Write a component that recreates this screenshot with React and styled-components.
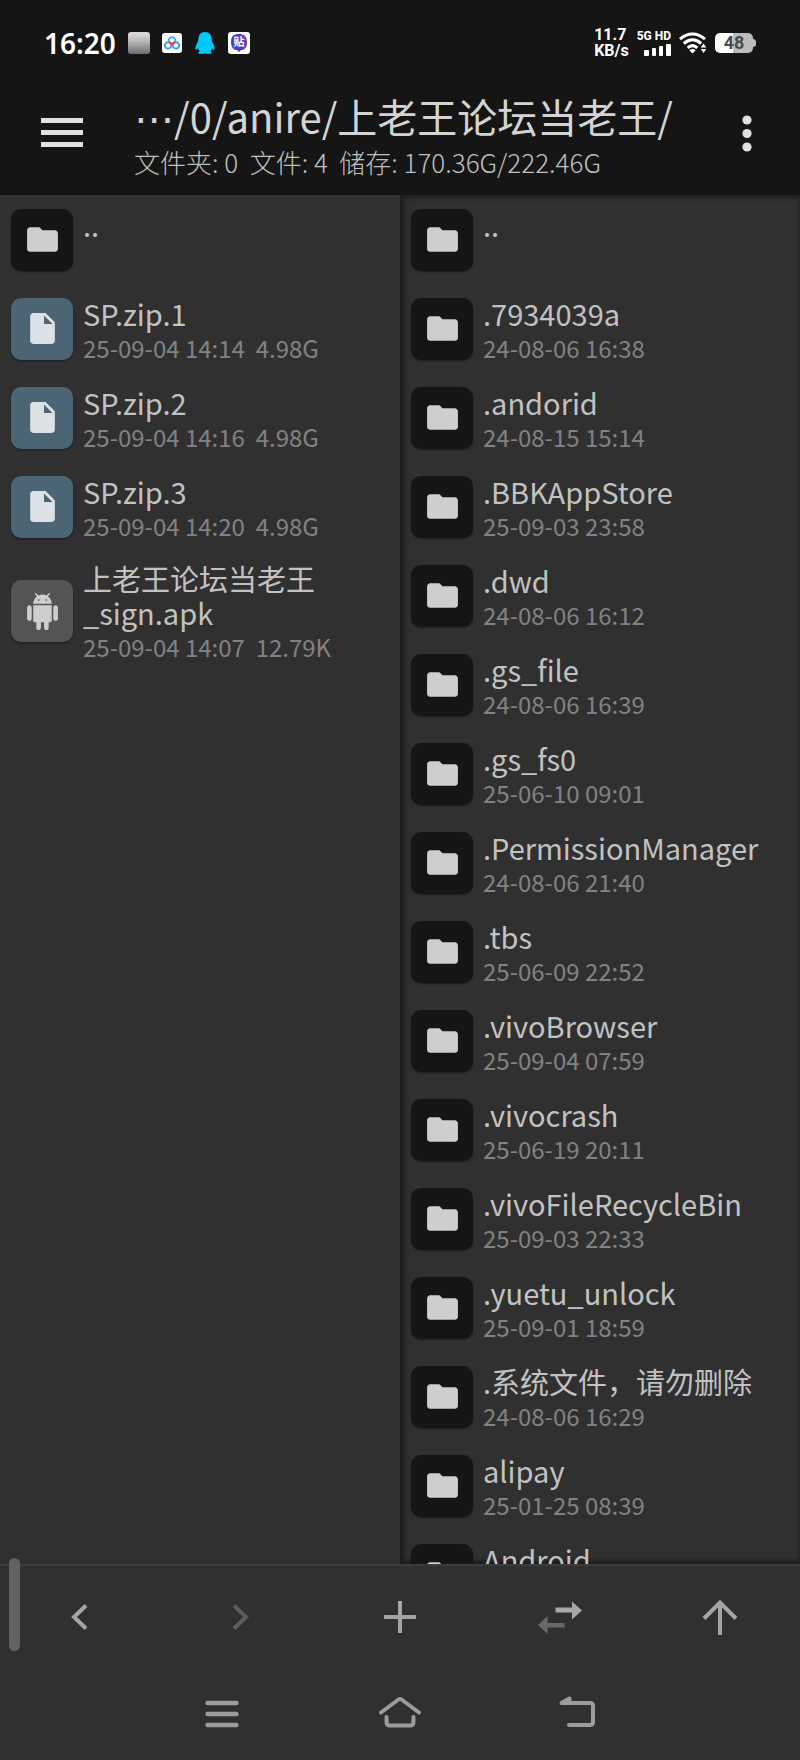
import React from "react";
import styled, { createGlobalStyle } from "styled-components";

const GlobalStyle = createGlobalStyle`
  * {
    box-sizing: border-box;
  }

  body {
    margin: 0;
    background-color: #303030;
    font-family: "Noto Sans CJK SC", "Noto Sans", sans-serif;
  }

  button {
    border: none;
    padding: 0;
    margin: 0;
    background: none;
    color: inherit;
    font-family: inherit;
    cursor: pointer;
  }

  svg {
    display: block;
    flex-shrink: 0;
  }
`;

const Page = styled.div`
  display: flex;
  flex-direction: column;
  height: 100vh;
  background-color: #303030;
  color: #c8c8c8;
`;

const StatusBar = styled.div`
  display: flex;
  justify-content: space-between;
  align-items: center;
  height: 86px;
  padding: 0 44px;
  background-color: #151515;
  color: #ffffff;
`;

const StatusGroup = styled.div`
  display: flex;
  align-items: center;
  gap: ${(props) => props.$gap}px;
`;

const Clock = styled.span`
  font-family: "Noto Sans", sans-serif;
  font-size: 28px;
  line-height: 32px;
  font-weight: 600;
`;

const Speed = styled.span`
  display: flex;
  flex-direction: column;
  font-family: Roboto, sans-serif;
  font-size: 16px;
  line-height: 16px;
  font-weight: 700;
`;

const Signal = styled.span`
  display: flex;
  flex-direction: column;
  align-items: flex-end;
  gap: 2px;
  font-family: Roboto, sans-serif;
  font-size: 12px;
  line-height: 12px;
  font-weight: 800;
`;

const Battery = styled.span`
  display: flex;
  align-items: center;
`;

const BatteryBody = styled.span`
  display: flex;
  justify-content: center;
  align-items: center;
  width: 38px;
  height: 20px;
  border-radius: 5px;
  background: linear-gradient(to right, #ffffff 48%, #bbbbbb 48%);
  color: #4a4a4a;
  font-family: Roboto, sans-serif;
  font-size: 18px;
  line-height: 20px;
  font-weight: 700;
`;

const BatteryTip = styled.span`
  width: 3px;
  height: 8px;
  border-radius: 0 3px 3px 0;
  background-color: #bbbbbb;
`;

const AppBar = styled.header`
  display: flex;
  align-items: center;
  height: 109px;
  padding: 0 32px 15px 40px;
  background-color: #151515;
  color: #e0e0e0;
`;

const PathBox = styled.div`
  flex: 1;
  min-width: 0;
  padding: 4px 0 0 50px;
  white-space: pre;
`;

const Path = styled.h1`
  margin: 0;
  font-size: 40px;
  line-height: 50px;
  font-weight: 400;
  color: #d4d4d4;
`;

const Dots = styled.span`
  font-family: "DejaVu Sans", sans-serif;
`;

const Summary = styled.p`
  margin: 0;
  font-size: 26px;
  line-height: 36px;
  font-weight: 300;
  color: #c0c0c0;
`;

const Panes = styled.main`
  display: flex;
  flex: 1;
  min-height: 0;
`;

const Pane = styled.ul`
  flex: 1;
  min-width: 0;
  margin: 0;
  padding: 0;
  list-style: none;
  overflow-y: auto;
  scrollbar-width: none;
  box-shadow: ${(props) =>
    props.$sunken
      ? "inset 6px 0 6px -2px #1c1c1c, inset 0 4px 4px -1px #222222, inset 0 -4px 4px -1px #1c1c1c"
      : "none"};
`;

const FileRow = styled.button`
  display: flex;
  align-items: center;
  gap: 10px;
  width: 100%;
  min-height: 89px;
  padding: 6px 11px;
  text-align: left;
`;

const tileColors = {
  folder: "#151515",
  file: "#4b6575",
  apk: "#545454",
};

const Tile = styled.span`
  display: flex;
  flex-shrink: 0;
  justify-content: center;
  align-items: center;
  width: 62px;
  height: 62px;
  border-radius: 10px;
  background-color: ${(props) => tileColors[props.$kind]};
  box-shadow: 0 1px 2px rgba(0, 0, 0, 0.4);
  color: ${(props) => (props.$kind === "file" ? "#dce1e5" : "#cecece")};
`;

const FileText = styled.span`
  display: block;
  flex: 1;
  min-width: 0;
  padding-top: 4px;
`;

const FileName = styled.span`
  display: block;
  font-size: 29px;
  line-height: 34px;
  color: #c2c2c2;
`;

const FileInfo = styled.span`
  display: block;
  min-height: 36px;
  font-size: 24px;
  line-height: 36px;
  white-space: pre;
  color: #828282;
`;

const Toolbar = styled.nav`
  display: grid;
  grid-template-columns: repeat(5, 1fr);
  height: 104px;
  border-top: 2px solid #3c3c3c;
  color: #a4a4a4;
`;

const ToolButton = styled.button`
  display: flex;
  justify-content: center;
  align-items: center;

  :disabled {
    cursor: default;
  }
`;

const SystemNav = styled.nav`
  display: flex;
  justify-content: center;
  align-items: center;
  gap: 134px;
  height: 92px;
  color: #9c9c9c;
`;

const EdgeHandle = styled.div`
  position: fixed;
  left: 9px;
  bottom: 109px;
  width: 11px;
  height: 93px;
  border-radius: 6px;
  background-color: #626262;
`;

const tilePaths = {
  folder:
    "M10 4H4c-1.1 0-1.99.9-1.99 2L2 18c0 1.1.9 2 2 2h16c1.1 0 2-.9 2-2V8c0-1.1-.9-2-2-2h-8l-2-2z",
  file:
    "M6 2c-1.1 0-1.99.9-1.99 2L4 20c0 1.1.89 2 1.99 2H18c1.1 0 2-.9 2-2V8l-6-6H6zm7 7V3.5L18.5 9H13z",
  apk:
    "M6 18c0 .55.45 1 1 1h1v3.5c0 .83.67 1.5 1.5 1.5s1.5-.67 1.5-1.5V19h2v3.5c0 .83.67 1.5 1.5 1.5s1.5-.67 1.5-1.5V19h1c.55 0 1-.45 1-1V8H6v10zM3.5 8C2.67 8 2 8.67 2 9.5v7c0 .83.67 1.5 1.5 1.5S5 17.33 5 16.5v-7C5 8.67 4.33 8 3.5 8zm17 0c-.83 0-1.5.67-1.5 1.5v7c0 .83.67 1.5 1.5 1.5s1.5-.67 1.5-1.5v-7c0-.83-.67-1.5-1.5-1.5zm-4.97-5.84l1.3-1.3c.2-.2.2-.51 0-.71-.2-.2-.51-.2-.71 0l-1.48 1.48C13.85 1.23 12.95 1 12 1c-.96 0-1.86.23-2.66.63L7.85.15c-.2-.2-.51-.2-.71 0-.2.2-.2.51 0 .71l1.31 1.31C6.97 3.26 6 5.01 6 7h12c0-1.99-.97-3.75-2.47-4.84zM10 5H9V4h1v1zm5 0h-1V4h1v1z",
};

const leftFiles = [
  { kind: "folder", name: "..", info: "" },
  { kind: "file", name: "SP.zip.1", info: "25-09-04 14:14  4.98G" },
  { kind: "file", name: "SP.zip.2", info: "25-09-04 14:16  4.98G" },
  { kind: "file", name: "SP.zip.3", info: "25-09-04 14:20  4.98G" },
  { kind: "apk", name: "上老王论坛当老王_sign.apk", info: "25-09-04 14:07  12.79K" },
];

const rightFiles = [
  { kind: "folder", name: "..", info: "" },
  { kind: "folder", name: ".7934039a", info: "24-08-06 16:38" },
  { kind: "folder", name: ".andorid", info: "24-08-15 15:14" },
  { kind: "folder", name: ".BBKAppStore", info: "25-09-03 23:58" },
  { kind: "folder", name: ".dwd", info: "24-08-06 16:12" },
  { kind: "folder", name: ".gs_file", info: "24-08-06 16:39" },
  { kind: "folder", name: ".gs_fs0", info: "25-06-10 09:01" },
  { kind: "folder", name: ".PermissionManager", info: "24-08-06 21:40" },
  { kind: "folder", name: ".tbs", info: "25-06-09 22:52" },
  { kind: "folder", name: ".vivoBrowser", info: "25-09-04 07:59" },
  { kind: "folder", name: ".vivocrash", info: "25-06-19 20:11" },
  { kind: "folder", name: ".vivoFileRecycleBin", info: "25-09-03 22:33" },
  { kind: "folder", name: ".yuetu_unlock", info: "25-09-01 18:59" },
  { kind: "folder", name: ".系统文件，请勿删除", info: "24-08-06 16:29" },
  { kind: "folder", name: "alipay", info: "25-01-25 08:39" },
  { kind: "folder", name: "Android", info: "" },
];

const AppIcons = () => (
  <>
    <svg width="22" height="22" viewBox="0 0 22 22">
      <defs>
        <linearGradient id="silver" x1="0" y1="0" x2="0" y2="1">
          <stop offset="0.1" stopColor="#d8d8d8" />
          <stop offset="0.45" stopColor="#b4b4b4" />
          <stop offset="1" stopColor="#6c6c6c" />
        </linearGradient>
      </defs>
      <rect width="22" height="22" rx="3" fill="url(#silver)" />
    </svg>
    <svg width="20" height="20" viewBox="0 0 20 20">
      <rect width="20" height="20" rx="3" fill="#ffffff" />
      <g fill="none" strokeWidth="2">
        <circle cx="6" cy="12.4" r="3.2" stroke="#3c9fe8" />
        <circle cx="14" cy="12.4" r="3.2" stroke="#3c9fe8" />
        <circle cx="10" cy="7.4" r="3.2" stroke="#46b4e6" />
        <path d="M7 8.4a3.2 3.2 0 0 0 6 0" stroke="#ee4b62" />
        <path d="M8.6 10.6L10 12L11.4 10.6" stroke="#ee4b62" />
      </g>
    </svg>
    <svg width="22" height="22" viewBox="-1 0 22 22">
      <path
        d="M10 0C5.6 0 3.4 3 3.4 7.4C3.4 9 2.2 10.8 1.2 13C.2 15.4 .2 17.6 1 17.8C1.6 18 2.5 16.8 2.9 16C3.2 17.4 4 18.5 4.9 19.3C3.7 19.8 3 20.5 3.3 21.2C3.7 22 8.2 22 10 21.2C11.8 22 16.3 22 16.7 21.2C17 20.5 16.3 19.8 15.1 19.3C16 18.5 16.8 17.4 17.1 16C17.5 16.8 18.4 18 19 17.8C19.8 17.6 19.8 15.4 18.8 13C17.8 10.8 16.6 9 16.6 7.4C16.6 3 14.4 0 10 0Z"
        fill="#00c8fa"
      />
    </svg>
    <svg width="22" height="22" viewBox="0 0 22 22">
      <defs>
        <linearGradient id="tie" x1="0" y1="1" x2="1" y2="0">
          <stop offset="0" stopColor="#2b7cf0" />
          <stop offset="0.3" stopColor="#4a3fc0" />
          <stop offset="0.75" stopColor="#5a3bb4" />
          <stop offset="1" stopColor="#f04a7c" />
        </linearGradient>
      </defs>
      <rect width="22" height="22" rx="3" fill="#ffffff" />
      <path
        d="M11 2C16.5 2 19 4 19 10.3C19 16 16.5 18 12.8 18.3L11 20L9.2 18.3C5.5 18 3 16 3 10.3C3 4 5.5 2 11 2Z"
        fill="url(#tie)"
      />
      <text x="11" y="14" fontSize="11" fontWeight="700" textAnchor="middle" fill="#ffffff">
        贴
      </text>
    </svg>
  </>
);

const Wifi = () => (
  <svg width="28" height="22" viewBox="0 0 28 22">
    <g fill="none" stroke="#ffffff" strokeWidth="3">
      <path d="M1 7.2C8.5 .3 18.5 .3 26 7.2" />
      <path d="M4.8 11.6C10.2 6.6 16.8 6.6 22.2 11.6" />
      <path d="M8.7 15.8C11.8 13 15.2 13 18.3 15.8" />
    </g>
    <path d="M10.3 18.3Q13.5 15.8 16.7 18.3L13.5 21.5Z" fill="#ffffff" />
    <path d="M24.5 11.5L27.3 15.5H21.7ZM24.5 21L27.3 17H21.7Z" fill="#ffffff" />
  </svg>
);

const FileItem = ({ file }) => (
  <li>
    <FileRow type="button">
      <Tile $kind={file.kind}>
        <svg width="37" height="37" viewBox="0 0 24 24" fill="currentColor">
          <path d={tilePaths[file.kind]} />
        </svg>
      </Tile>
      <FileText>
        <FileName>{file.name}</FileName>
        <FileInfo>{file.info}</FileInfo>
      </FileText>
    </FileRow>
  </li>
);

class App extends React.Component {
  render() {
    return (
      <Page>
        <GlobalStyle />
        <StatusBar>
          <StatusGroup $gap={12}>
            <Clock>16:20</Clock>
            <AppIcons />
          </StatusGroup>
          <StatusGroup $gap={8}>
            <Speed>
              <span>11.7</span>
              <span>KB/s</span>
            </Speed>
            <Signal>
              <span>5G HD</span>
              <svg width="27" height="12" viewBox="0 0 27 12" fill="#ffffff">
                <rect x="0" y="6" width="5" height="6" rx="1" />
                <rect x="8" y="4" width="4" height="8" rx="1" />
                <rect x="15" y="2" width="4" height="10" rx="1" />
                <rect x="22" y="0" width="5" height="12" rx="1" />
              </svg>
            </Signal>
            <Wifi />
            <Battery>
              <BatteryBody>48</BatteryBody>
              <BatteryTip />
            </Battery>
          </StatusGroup>
        </StatusBar>
        <AppBar>
          <button type="button" aria-label="菜单">
            <svg width="44" height="44" viewBox="0 0 44 44" fill="currentColor">
              <path d="M1 7h42v5H1zM1 19h42v5H1zM1 31h42v5H1z" />
            </svg>
          </button>
          <PathBox>
            <Path>
              <Dots>⋯</Dots>/0/anire/上老王论坛当老王/
            </Path>
            <Summary>{"文件夹: 0  文件: 4  储存: 170.36G/222.46G"}</Summary>
          </PathBox>
          <button type="button" aria-label="更多">
            <svg width="42" height="44" viewBox="0 0 42 44" fill="currentColor">
              <circle cx="21" cy="9" r="4.6" />
              <circle cx="21" cy="22.5" r="4.6" />
              <circle cx="21" cy="36" r="4.6" />
            </svg>
          </button>
        </AppBar>
        <Panes>
          <Pane>
            {leftFiles.map((file) => (
              <FileItem key={file.name} file={file} />
            ))}
          </Pane>
          <Pane $sunken>
            {rightFiles.map((file) => (
              <FileItem key={file.name} file={file} />
            ))}
          </Pane>
        </Panes>
        <Toolbar>
          <ToolButton type="button" aria-label="后退">
            <svg width="44" height="44" viewBox="0 0 44 44" fill="none" stroke="currentColor" strokeWidth="4">
              <path d="M28 10.5L16 22L28 33.5" />
            </svg>
          </ToolButton>
          <ToolButton type="button" aria-label="前进" disabled>
            <svg width="44" height="44" viewBox="0 0 44 44" fill="none" stroke="#5c5c5c" strokeWidth="4">
              <path d="M16 10.5L28 22L16 33.5" />
            </svg>
          </ToolButton>
          <ToolButton type="button" aria-label="新建">
            <svg width="44" height="44" viewBox="0 0 44 44" fill="currentColor">
              <path d="M6 20h32v4H6zM20 6h4v32h-4z" />
            </svg>
          </ToolButton>
          <ToolButton type="button" aria-label="同步">
            <svg width="44" height="44" viewBox="0 0 44 44">
              <path d="M17.5 12.5H34V6.5L44 15.5L34 24.5V17.5H17.5Z" fill="#a8a8a8" />
              <path d="M26.5 28H9.5V21L0 30L9.5 39V32.5H26.5Z" fill="#686868" />
            </svg>
          </ToolButton>
          <ToolButton type="button" aria-label="上级">
            <svg width="44" height="44" viewBox="0 0 44 44" fill="none" stroke="currentColor" strokeWidth="4">
              <path d="M22 40V8M6 23.5L22 7.5L38 23.5" />
            </svg>
          </ToolButton>
        </Toolbar>
        <SystemNav>
          <button type="button" aria-label="最近任务">
            <svg width="44" height="44" viewBox="0 0 44 44" stroke="currentColor" strokeWidth="4.4" strokeLinecap="round">
              <path d="M7.5 11H36.5M7.5 22H36.5M7.5 33H36.5" />
            </svg>
          </button>
          <button type="button" aria-label="主屏幕">
            <svg width="44" height="44" viewBox="0 0 44 44" fill="none" stroke="currentColor" strokeWidth="4" strokeLinecap="round" strokeLinejoin="round">
              <path d="M3 20.5L20.5 7.5Q22 6.5 23.5 7.5L41 20.5" />
              <path d="M8.5 25V30Q8.5 33.5 12 33.5H32Q35.5 33.5 35.5 30V25" />
            </svg>
          </button>
          <button type="button" aria-label="返回">
            <svg width="44" height="44" viewBox="0 0 44 44" fill="none" stroke="currentColor" strokeWidth="4" strokeLinecap="round" strokeLinejoin="round">
              <path d="M13 33H34Q37 33 37 30V14Q37 11 34 11H5.5L13.5 6.5V10" />
            </svg>
          </button>
        </SystemNav>
        <EdgeHandle />
      </Page>
    );
  }
}

export default App;
